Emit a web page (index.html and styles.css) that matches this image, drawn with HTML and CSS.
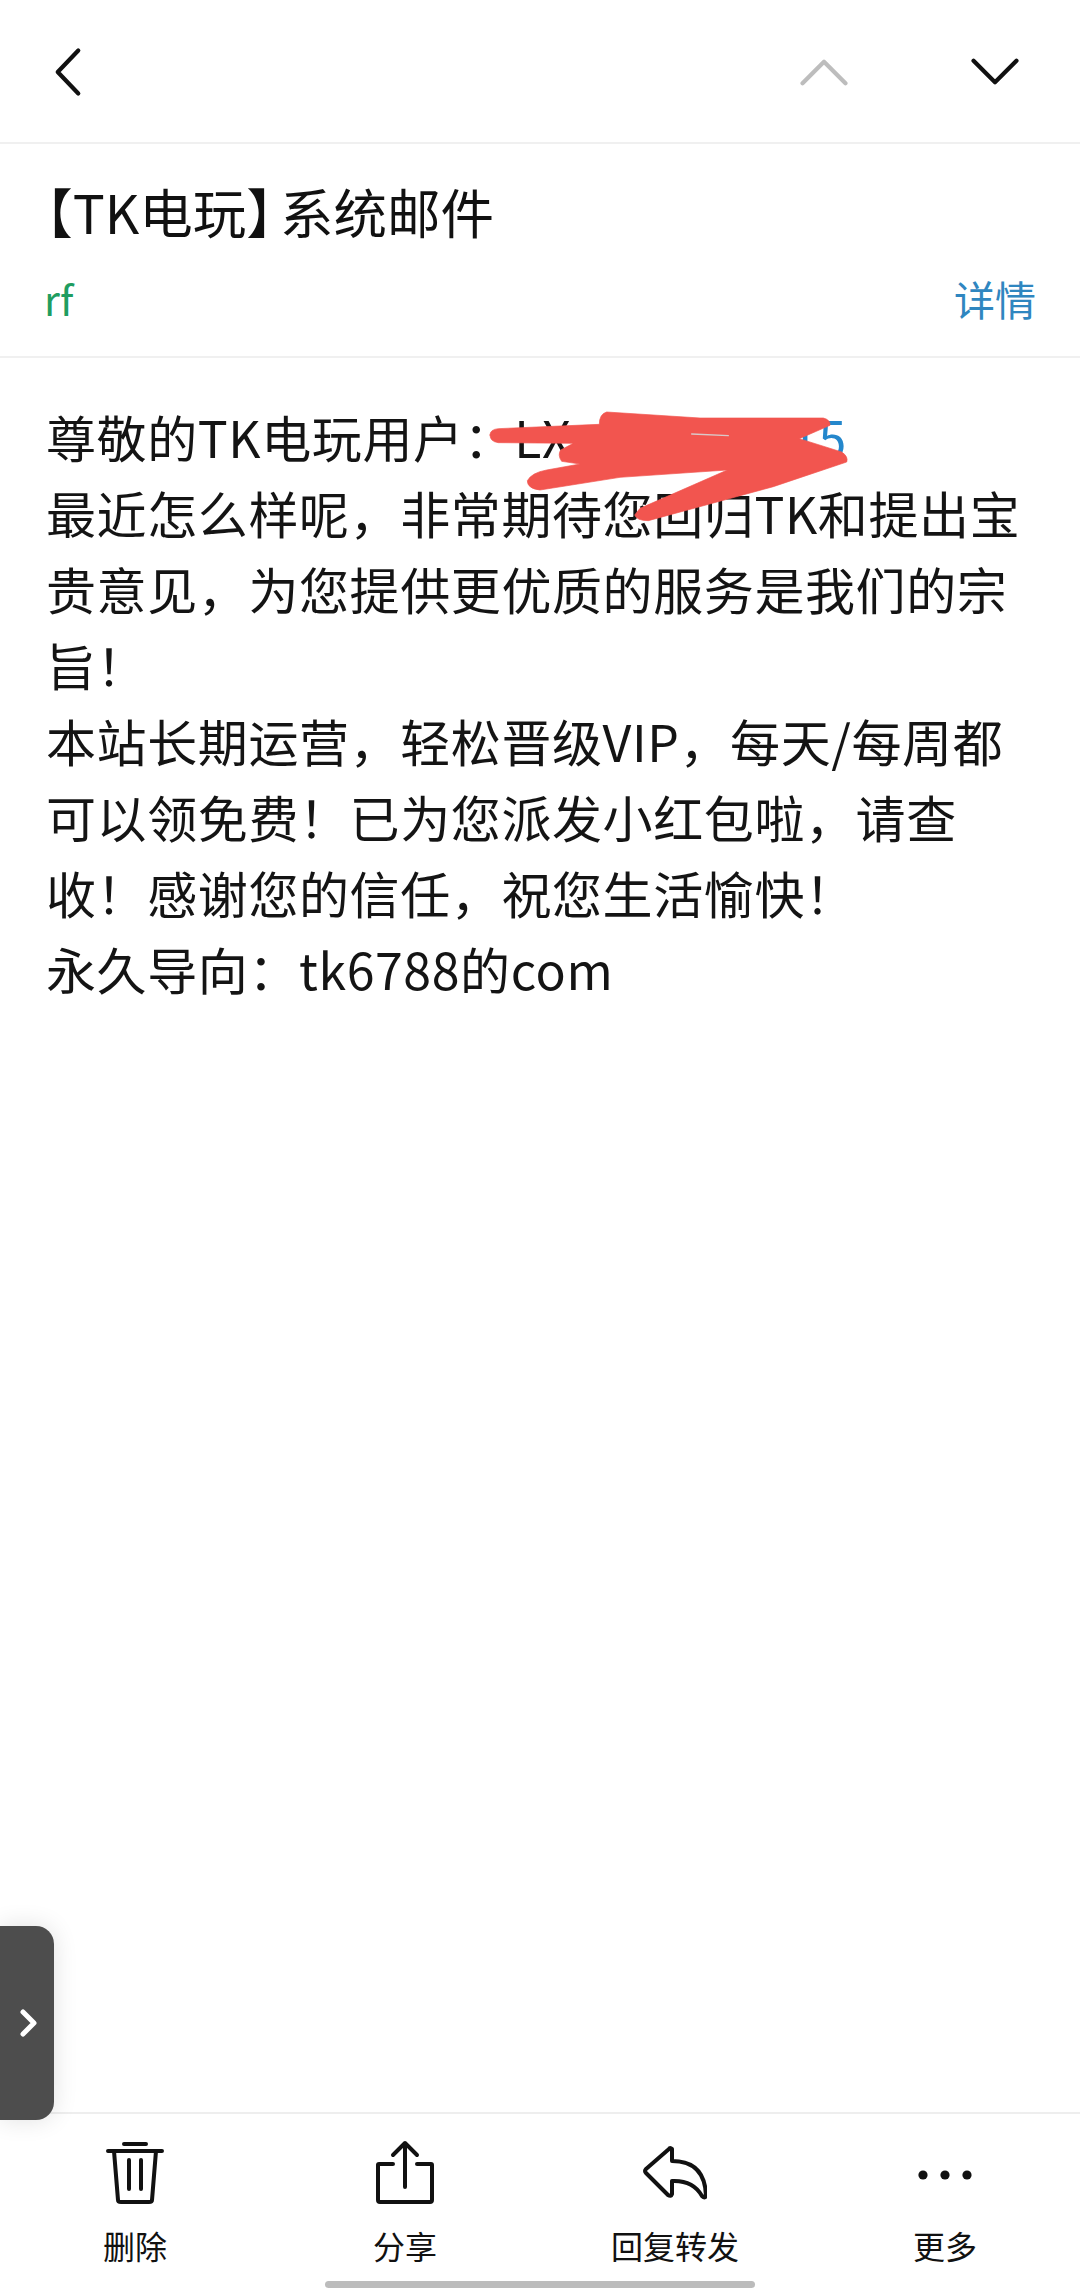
FILE: index.html
```html
<!DOCTYPE html>
<html lang="zh-CN">
<head>
<meta charset="utf-8">
<title>系统邮件</title>
<link rel="stylesheet" href="styles.css">
</head>
<body>
<div class="page">
  <header class="topbar">
    <svg class="ico-back" viewBox="0 0 30 52"><path d="M26 3 L4 26 L26 49"/></svg>
    <div class="nav-arrows">
      <svg class="ico-up" viewBox="0 0 52 30"><path d="M3 27 L26 4 L49 27"/></svg>
      <svg class="ico-down" viewBox="0 0 52 30"><path d="M3 3 L26 26 L49 3"/></svg>
    </div>
  </header>
  <section class="subject">
    <h1 class="title"><span class="bracket">【</span>TK电玩<span class="bracket close">】</span>系统邮件</h1>
    <div class="meta"><span class="sender">rf</span><span class="details">详情</span></div>
  </section>
  <main class="content">
    <p class="line">尊敬的TK电玩用户：LX<span class="mail">15</span></p>
    <p class="line">最近怎么样呢，非常期待您回归TK和提出宝贵意见，为您提供更优质的服务是我们的宗旨！</p>
    <p class="line">本站长期运营，轻松晋级VIP，每天/每周都可以领免费！已为您派发小红包啦，请查收！感谢您的信任，祝您生活愉快！</p>
    <p class="line">永久导向：tk6788的com</p>
    <svg class="scribble" viewBox="0 0 1320 450"><path class="ink" d="M150 135 Q150 118 175 116 L478 103 Q478 72 500 66 L780 84 L1150 84 Q1172 90 1170 106 L1078 146 L1205 186 Q1226 200 1220 216 L1000 290 L625 392 Q590 392 584 375 L600 355 L862 240 L540 262 L300 300 Q262 296 262 272 Q275 248 320 240 L420 222 L365 214 Q352 195 362 180 L400 160 L175 158 Q150 155 150 135Z"/><path class="sliver" d="M755 132 L865 137"/></svg>
  </main>
  <button class="side-tab" type="button" aria-label="展开">
    <svg viewBox="0 0 18 28"><path d="M3 3 L14 14 L3 25"/></svg>
  </button>
  <footer class="toolbar">
    <div class="tool">
      <svg class="tool-ico" viewBox="0 0 64 64"><path d="M5 11 H59 M21 4 H43 M11 11 L15 60 Q15 62 18 62 H46 Q49 62 49 60 L53 11 M26 20 V49 M38 20 V49"/></svg>
      <span class="tool-label">删除</span>
    </div>
    <div class="tool">
      <svg class="tool-ico" viewBox="0 0 64 64"><path d="M20 24 H6 Q5 24 5 25 V60 Q5 62 7 62 H57 Q59 62 59 60 V25 Q59 24 58 24 H44 M32 47 V3 M20 15 L32 3 L44 15"/></svg>
      <span class="tool-label">分享</span>
    </div>
    <div class="tool">
      <svg class="tool-ico" viewBox="0 0 64 64"><path d="M26 9 Q27 7 29 9 V21 Q62 21 63 56 Q62 59 59 56 Q50 40 29 41 V54 Q28 57 25 55 L3 33 Q1 31 3 29Z"/></svg>
      <span class="tool-label">回复转发</span>
    </div>
    <div class="tool">
      <svg class="tool-ico dots" viewBox="0 0 64 64"><circle cx="10" cy="35" r="4.6"/><circle cx="32" cy="35" r="4.6"/><circle cx="54" cy="35" r="4.6"/></svg>
      <span class="tool-label">更多</span>
    </div>
  </footer>
  <div class="home-row"><span class="home-bar"></span></div>
</div>
</body>
</html>
```
FILE: styles.css
```css
* { box-sizing: border-box; }
html, body { margin: 0; padding: 0; background: #fff; }
body { font-family: "Noto Sans CJK SC", "Noto Sans", sans-serif; color: #111; }
.page { position: relative; width: 1080px; height: 2292px; display: flex; flex-direction: column; overflow: hidden; }
svg path { fill: none; stroke-linecap: round; stroke-linejoin: round; }

.topbar { height: 144px; flex: none; display: flex; align-items: flex-start; justify-content: space-between; border-bottom: 2px solid #f0f0f0; padding: 47px 60px 0 54px; }
.ico-back { width: 28px; height: 50px; }
.ico-back path, .ico-down path { stroke: #111; stroke-width: 4.5; }
.nav-arrows { display: flex; gap: 121px; padding-top: 11px; }
.ico-up, .ico-down { width: 50px; height: 28px; }
.ico-up path { stroke: #bdbdbd; stroke-width: 4.5; }

.subject { height: 214px; flex: none; border-bottom: 2px solid #f0f0f0; padding: 0 44px 0 30px; }
.title { margin: 0; padding: 30px 0 0 16px; font-size: 53.5px; line-height: 74px; font-weight: 400; color: #111; height: 118px; }
.bracket { font-feature-settings: "halt"; }
.close { margin-right: 7px; }
.meta { display: flex; justify-content: space-between; align-items: center; height: 60px; margin-top: 6px; padding-left: 14px; font-size: 41px; line-height: 60px; }
.sender { color: #1f9d60; }
.details { color: #2f86c0; }

.content { position: relative; flex: 1; padding: 40px 40px 0 46px; font-size: 50px; line-height: 76px; letter-spacing: .6px; }
.line { margin: 0; color: #141414; }
.mail { color: #2487cc; margin-left: 219px; }
.scribble { position: absolute; left: 440px; top: 32px; width: 440px; height: 150px; }
.scribble .ink { fill: #f2554f; stroke: #f2554f; stroke-width: 2; }
.scribble .sliver { stroke: #d9c9c9; stroke-width: 4; }

.side-tab { position: absolute; left: 0; top: 1926px; width: 54px; height: 194px; padding: 0; border: 0; border-radius: 0 18px 18px 0; background: #4d4d4d; box-shadow: 0 0 24px rgba(0,0,0,.12); display: flex; align-items: center; justify-content: center; }
.side-tab svg { width: 18px; height: 28px; margin-left: 3px; }
.side-tab path { stroke: #fff; stroke-width: 5; }

.toolbar { height: 158px; flex: none; border-top: 2px solid #eeeeee; display: grid; grid-template-columns: repeat(4, 270px); padding-top: 26px; }
.tool { display: flex; flex-direction: column; align-items: center; gap: 19px; }
.tool-ico { width: 64px; height: 64px; }
.tool-ico path { stroke: #111; stroke-width: 4; }
.dots circle { fill: #111; }
.tool-label { font-size: 32px; line-height: 44px; color: #111; }

.home-row { height: 22px; flex: none; display: flex; justify-content: center; align-items: flex-start; padding-top: 11px; }
.home-bar { width: 430px; height: 7px; border-radius: 4px; background: #bcbcbc; }
```
